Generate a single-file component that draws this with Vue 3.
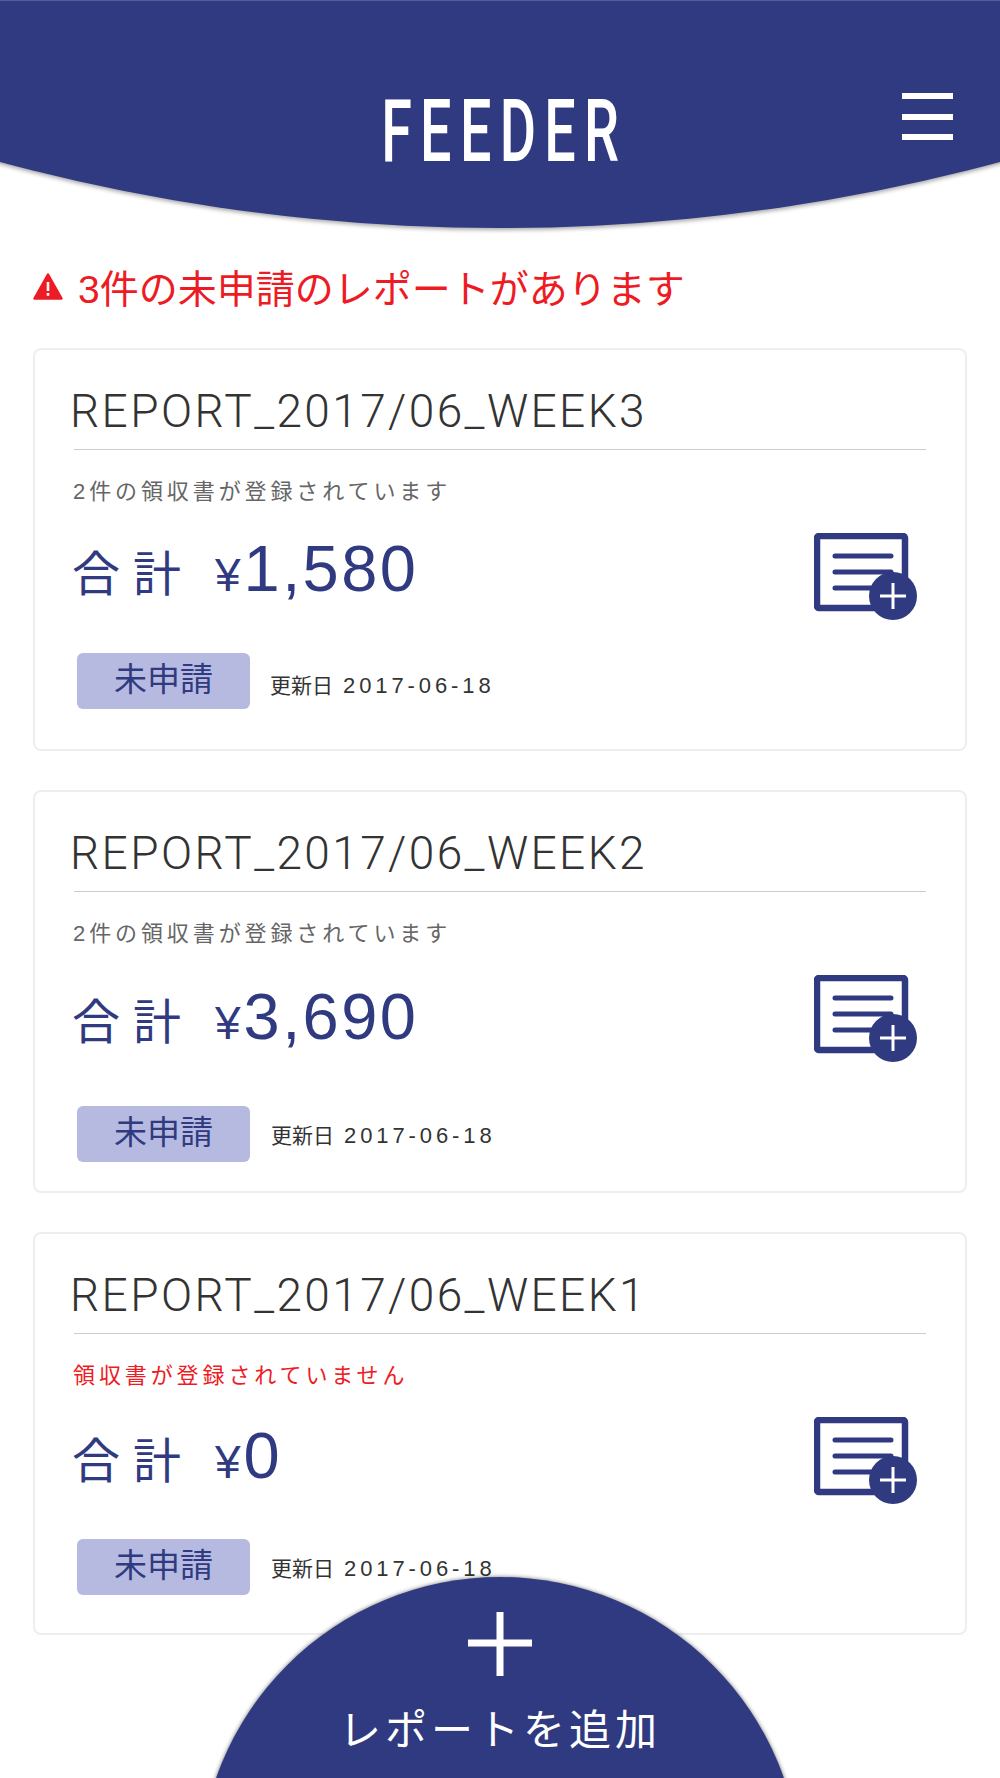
<template>
  <div class="page">
    <header class="app-header">
      <div class="logo">FEEDER</div>
      <button class="menu-btn" aria-label="menu">
        <span></span>
        <span></span>
        <span></span>
      </button>
    </header>

    <main class="content">
      <p class="alert">
        <svg class="alert-icon" viewBox="0 0 30 27" width="30" height="27">
          <path d="M15 1.5 L28.5 25.5 H1.5 Z" fill="#ed1c24" stroke="#ed1c24" stroke-width="2.5" stroke-linejoin="round" />
          <rect x="13.7" y="9" width="2.6" height="9" fill="#fff" />
          <rect x="13.7" y="20" width="2.6" height="2.8" fill="#fff" />
        </svg>
        <span>3件の未申請のレポートがあります</span>
      </p>

      <section v-for="report in reports" :key="report.title" class="card">
        <h2 class="card-title">{{ report.title }}</h2>
        <p class="card-note" :class="{ 'is-empty': report.empty }">{{ report.note }}</p>
        <div class="card-total">
          <div class="total-text">
            <span class="total-label">合計</span>
            <span class="total-yen">¥</span>
            <span class="total-num">{{ report.total }}</span>
          </div>
          <svg class="doc-icon" viewBox="0 0 104 88" width="104" height="88">
            <rect x="3" y="3" width="88" height="72" rx="2" fill="none" stroke="#303a80" stroke-width="6.5" />
            <path d="M21 23 H77 M21 39 H77 M21 55 H77" stroke="#303a80" stroke-width="5" stroke-linecap="round" />
            <circle cx="79" cy="63" r="24" fill="#303a80" />
            <path d="M66 63 H92 M79 50 V76" stroke="#fff" stroke-width="3" />
          </svg>
        </div>
        <div class="card-foot">
          <span class="badge">未申請</span>
          <span class="updated"><span class="updated-label">更新日</span> 2017-06-18</span>
        </div>
      </section>
    </main>

    <button class="add-btn">
      <svg class="add-plus" viewBox="0 0 64 64" width="64" height="64">
        <path d="M32 0 V64 M0 31 H64" stroke="#fff" stroke-width="7" />
      </svg>
      <span class="add-label">レポートを追加</span>
    </button>
  </div>
</template>

<script setup>
const reports = [
  {
    title: 'REPORT_2017/06_WEEK3',
    note: '2件の領収書が登録されています',
    total: '1,580',
    empty: false
  },
  {
    title: 'REPORT_2017/06_WEEK2',
    note: '2件の領収書が登録されています',
    total: '3,690',
    empty: false
  },
  {
    title: 'REPORT_2017/06_WEEK1',
    note: '領収書が登録されていません',
    total: '0',
    empty: true
  }
]
</script>

<style>
html,
body {
  margin: 0;
  background: #fff;
}
</style>

<style scoped>
.page {
  position: relative;
  width: 1000px;
  height: 1778px;
  overflow: hidden;
  background: #fff;
  font-family: "Liberation Sans", "Noto Sans CJK JP", sans-serif;
}

.app-header {
  position: relative;
  height: 228px;
  display: flex;
  justify-content: center;
}

/* big circle so the curve keeps its slope at the screen edges */
.app-header::before {
  content: '';
  position: absolute;
  left: 50%;
  bottom: 0;
  width: 3854px;
  height: 3854px;
  margin-left: -1927px;
  border-radius: 50%;
  background: #303a80;
  box-shadow: 0 2px 4px rgba(0, 0, 0, 0.35);
}

.app-header::after {
  content: '';
  position: absolute;
  top: 0;
  left: 0;
  right: 0;
  height: 1px;
  background: #555c98;
}

.logo {
  position: relative;
  margin-top: 83px;
  height: 96px;
  font-family: Roboto, sans-serif;
  font-size: 87px;
  line-height: 96px;
  font-weight: 500;
  letter-spacing: 13px;
  color: #fff;
  transform: scaleX(0.64) translateX(6px);
}

.menu-btn {
  position: absolute;
  top: 93px;
  right: 47px;
  width: 51px;
  height: 47px;
  padding: 0;
  border: 0;
  background: none;
  display: flex;
  flex-direction: column;
  justify-content: space-between;
}

.menu-btn span {
  display: block;
  height: 6px;
  background: #fff;
}

.content {
  padding: 28px 33px 0;
}

.alert {
  display: flex;
  align-items: center;
  margin: 0 0 32px;
  height: 60px;
  font-size: 39px;
  color: #ed1c24;
}

.alert-icon {
  margin-right: 15px;
}

.card {
  box-sizing: border-box;
  height: 403px;
  margin-bottom: 39px;
  padding: 0 39px;
  border: 2px solid #eee;
  border-radius: 8px;
  background: #fff;
}

.card-title {
  margin: 0;
  padding: 31px 0 7px;
  height: 61px;
  border-bottom: 1px solid #ccc;
  font-family: Roboto, sans-serif;
  font-size: 46px;
  line-height: 61px;
  font-weight: 300;
  letter-spacing: 2.4px;
  color: #333;
  box-sizing: content-box;
  text-indent: -4px;
}

.card-note {
  margin: 23px 0 0 -1px;
  height: 38px;
  font-size: 22px;
  line-height: 38px;
  letter-spacing: 3.9px;
  color: #666;
}

.card-note.is-empty {
  color: #ed1c24;
}

.card-total {
  display: flex;
  justify-content: space-between;
  align-items: flex-start;
  margin-top: 9px;
  height: 133px;
}

.total-text {
  display: flex;
  align-items: baseline;
  margin-left: -2px;
  padding-top: 11px;
  color: #303a80;
}

.card:nth-of-type(2) .total-text {
  padding-top: 17px;
}

.card:nth-of-type(3) .total-text {
  padding-top: 14px;
}

.card:nth-of-type(2) .card-total {
  height: 144px;
}

.card:nth-of-type(3) .card-total {
  height: 135px;
}

.total-label {
  font-size: 48px;
  letter-spacing: 13px;
}

.total-yen {
  margin-left: 21px;
  font-size: 46px;
}

.total-num {
  margin-left: 3px;
  font-size: 65px;
  letter-spacing: 2.4px;
}

.doc-icon {
  margin-right: 8px;
  margin-top: 13px;
}

.card-foot {
  display: flex;
  align-items: center;
  margin-left: 3px;
}

.badge {
  width: 173px;
  height: 56px;
  border-radius: 6px;
  background: #b6bae0;
  color: #303a80;
  font-size: 33px;
  line-height: 54px;
  text-align: center;
}

.updated {
  margin-left: 21px;
  font-size: 22px;
  letter-spacing: 3.9px;
  color: #333;
}

.card:nth-of-type(1) .updated {
  margin-top: 6px;
  margin-left: 20px;
}

.updated-label {
  font-size: 21px;
  letter-spacing: 0;
}

.add-btn {
  position: absolute;
  left: 199px;
  top: 1577px;
  width: 602px;
  height: 602px;
  padding: 35px 0 0;
  border: 0;
  border-radius: 50%;
  background: #303a80;
  box-shadow: 0 0 4px rgba(0, 0, 0, 0.55);
  display: flex;
  flex-direction: column;
  align-items: center;
  font-family: "Noto Sans CJK JP", sans-serif;
  color: #fff;
}

.add-plus {
  display: block;
}

.add-label {
  margin-top: 22px;
  font-size: 42px;
  line-height: 58px;
  letter-spacing: 4px;
}
</style>
